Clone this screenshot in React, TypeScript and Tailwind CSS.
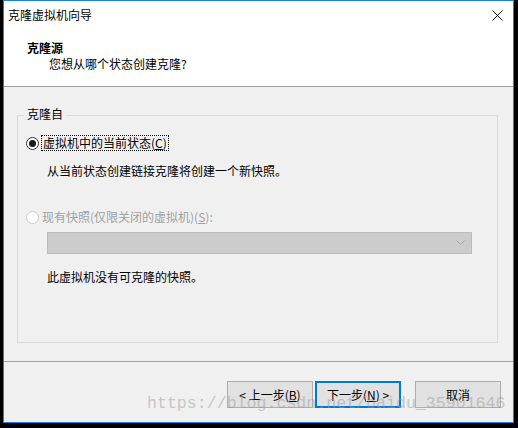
const font = { fontFamily: '"Noto Sans CJK SC", "Noto Sans", sans-serif' };

function Radio({ checked, disabled }: { checked?: boolean; disabled?: boolean }) {
  return (
    <span
      className={
        "flex h-[13px] w-[13px] shrink-0 items-center justify-center rounded-full border bg-white " +
        (disabled ? "border-[#cccccc]" : "border-[#333333]")
      }
    >
      {checked ? <span className="h-[7px] w-[7px] rounded-full bg-[#1a1a1a]" /> : null}
    </span>
  );
}

function Button({ label, primary }: { label: React.ReactNode; primary?: boolean }) {
  return (
    <div
      className={
        "flex h-[27px] w-[86px] items-center justify-center bg-[#e1e1e1] text-[12px] text-black " +
        (primary ? "border-2 border-[#0078d7]" : "border border-[#adadad]")
      }
    >
      {label}
    </div>
  );
}

export default function App() {
  return (
    <div className="h-[428px] w-[518px] bg-black" style={font}>
      <div className="relative ml-[3px] flex h-[423px] w-[511px] flex-col border border-[#1883d7] bg-[#f0f0f0] text-[12px] leading-[16px] text-black">
        {/* Title bar + header */}
        <div className="h-[86px] border-b border-[#a0a0a0] bg-white">
          <div className="flex h-[28px] items-center justify-between pl-[4px] pr-[10px]">
            <span>克隆虚拟机向导</span>
            <svg width="11" height="11" viewBox="0 0 11 11">
              <path d="M0.5 0.5 L10.5 10.5 M10.5 0.5 L0.5 10.5" stroke="#111" strokeWidth="1" />
            </svg>
          </div>
          <div className="mt-[11px] pl-[23px] font-bold">克隆源</div>
          <div className="pl-[45px]">您想从哪个状态创建克隆?</div>
        </div>

        {/* Body */}
        <div className="flex flex-1 flex-col">
          <div className="relative ml-[13px] mt-[28px] h-[228px] w-[481px] border border-[#dcdcdc]">
            <span className="absolute -top-[10px] left-[6px] bg-[#f0f0f0] px-[3px]">克隆自</span>
            <div className="flex flex-col pl-[8px] pt-[19px]">
              <div className="flex items-center">
                <Radio checked />
                <span className="ml-[2px] border border-dotted border-black px-[1px] leading-[14px]">
                  虚拟机中的当前状态(<span className="underline">C</span>)
                </span>
              </div>
              <div className="ml-[21px] mt-[12px]">从当前状态创建链接克隆将创建一个新快照。</div>
              <div className="mt-[30px] flex items-center">
                <Radio disabled />
                <span className="ml-[3px] text-[#a0a0a0]">
                  现有快照(仅限关闭的虚拟机)(<span className="underline">S</span>):
                </span>
              </div>
              <div className="ml-[21px] mt-[7px] flex h-[22px] w-[425px] items-center justify-end border border-[#bcbcbc] bg-[#cccccc] pr-[6px]">
                <svg width="9" height="6" viewBox="0 0 9 6">
                  <path d="M0.5 0.5 L4.5 4.5 L8.5 0.5" fill="none" stroke="#a8a8a8" strokeWidth="1" />
                </svg>
              </div>
              <div className="ml-[21px] mt-[15px]">此虚拟机没有可克隆的快照。</div>
            </div>
          </div>

          <div className="mt-[18px] h-px bg-[#a0a0a0]" />

          <div className="mt-[19px] flex justify-end pr-[12px]">
            <Button label={<>&lt; 上一步(<span className="underline">B</span>)</>} />
            <div className="ml-[2px]">
              <Button primary label={<>下一步(<span className="underline">N</span>) &gt;</>} />
            </div>
            <div className="ml-[14px]">
              <Button label="取消" />
            </div>
          </div>
        </div>

        <span
          className="pointer-events-none absolute left-[143px] top-[391px] text-[16.6px] leading-[24px] text-[#9a9a9a]/50"
          style={{ fontFamily: '"Liberation Mono", monospace' }}
        >
          https://blog.csdn.net/baidu_35901646
        </span>
      </div>
    </div>
  );
}
